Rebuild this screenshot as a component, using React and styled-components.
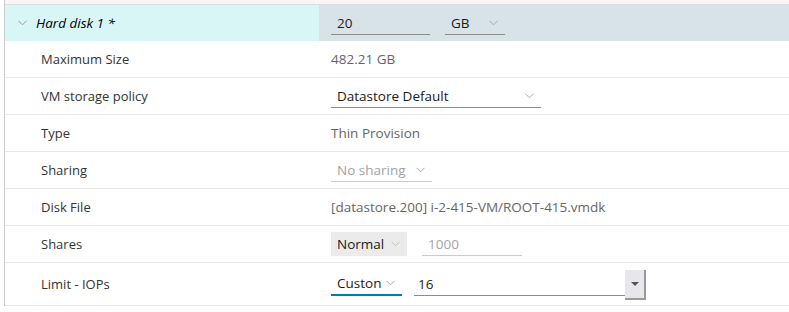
import React from 'react';
import styled, { createGlobalStyle } from 'styled-components';

const GlobalStyle = createGlobalStyle`
  body {
    margin: 0;
    background: #fff;
    font-family: 'Open Sans', 'Noto Sans', sans-serif;
    font-size: 13px;
  }
`;

const Table = styled.div`
  margin-left: 4px;
  border-left: 1px solid #cccccc;
  width: 784px;
`;

const PrevRow = styled.div`
  height: 4px;
  background: #f6f6f6;
  border-bottom: 1px solid #dddddd;
`;

const Row = styled.div`
  display: grid;
  grid-template-columns: 314px 1fr;
  height: ${({ $h }) => $h || 36}px;
  border-bottom: ${({ $head }) => ($head ? 'none' : '1px solid #e8e8e8')};
`;

const LabelCell = styled.div`
  display: flex;
  align-items: center;
  gap: 9px;
  padding-left: ${({ $head }) => ($head ? '13px' : '36px')};
  background: ${({ $head }) => ($head ? '#d8f6f6' : 'transparent')};
  color: ${({ $head }) => ($head ? '#000' : '#333')};
  font-style: ${({ $head }) => ($head ? 'italic' : 'normal')};
  font-size: ${({ $head }) => ($head ? '13.5px' : '13px')};
`;

const ValueCell = styled.div`
  display: flex;
  align-items: center;
  padding-left: 12px;
  background: ${({ $head }) => ($head ? '#d8e3e9' : 'transparent')};
  color: #666;
  font-size: 13.5px;
`;

const Field = styled.div`
  display: flex;
  align-items: center;
  justify-content: space-between;
  box-sizing: border-box;
  width: ${({ $w }) => $w}px;
  height: ${({ $hgt }) => $hgt || 23}px;
  margin-left: ${({ $ml }) => $ml || 0}px;
  padding: 0 7px 0 ${({ $pl }) => $pl || 6}px;
  color: ${({ $off }) => ($off ? '#a3a3a3' : '#1a1a1a')};
  background: ${({ $bg }) => $bg || 'transparent'};
  border-bottom: ${({ $line }) => $line || '1px solid #8c8c8c'};
  font-size: 13.5px;
  white-space: nowrap;
`;

const SpinButton = styled.div`
  display: flex;
  align-items: center;
  justify-content: center;
  width: 21px;
  height: 30px;
  box-sizing: border-box;
  background: #e7e7eb;
  border-right: 2px solid #9a9a9a;
  border-bottom: 2px solid #9a9a9a;
  margin-top: 2px;
`;

const Caret = styled.span`
  width: 0;
  height: 0;
  border-left: 4px solid transparent;
  border-right: 4px solid transparent;
  border-top: 4px solid #555;
`;

const Chevron = ({ color = '#a8a8a8' }) => (
  <svg width="9" height="6" viewBox="0 0 9 6">
    <path d="M0.5 0.8 L4.5 4.8 L8.5 0.8" fill="none" stroke={color} strokeWidth="1" />
  </svg>
);

const App = () => (
  <>
    <GlobalStyle />
    <Table>
      <PrevRow />
      <Row $head>
        <LabelCell $head>
          <Chevron color="#9a9a9a" />
          <span>Hard disk 1 *</span>
        </LabelCell>
        <ValueCell $head>
          <Field $w={99} $hgt={24}>20</Field>
          <Field $w={60} $hgt={24} $ml={15}>
            GB <Chevron />
          </Field>
        </ValueCell>
      </Row>
      <Row>
        <LabelCell>Maximum Size</LabelCell>
        <ValueCell>482.21 GB</ValueCell>
      </Row>
      <Row>
        <LabelCell>VM storage policy</LabelCell>
        <ValueCell>
          <Field $w={210}>
            Datastore Default <Chevron />
          </Field>
        </ValueCell>
      </Row>
      <Row>
        <LabelCell>Type</LabelCell>
        <ValueCell>Thin Provision</ValueCell>
      </Row>
      <Row>
        <LabelCell>Sharing</LabelCell>
        <ValueCell>
          <Field $w={101} $off $line="1px solid #cccccc">
            No sharing <Chevron />
          </Field>
        </ValueCell>
      </Row>
      <Row>
        <LabelCell>Disk File</LabelCell>
        <ValueCell>[datastore.200] i-2-415-VM/ROOT-415.vmdk</ValueCell>
      </Row>
      <Row>
        <LabelCell>Shares</LabelCell>
        <ValueCell>
          <Field $w={76} $hgt={24} $bg="#ebebeb" $line="none">
            Normal <Chevron color="#c4c4c4" />
          </Field>
          <Field $w={100} $ml={15} $off $line="1px solid #cccccc">
            1000
          </Field>
        </ValueCell>
      </Row>
      <Row $h={42}>
        <LabelCell>Limit - IOPs</LabelCell>
        <ValueCell>
          <Field $w={71} $hgt={24} $line="2px solid #0079b8">
            Custon <Chevron />
          </Field>
          <Field $w={211} $ml={12} $pl={4} $line="1px solid #8c8c8c">
            16
          </Field>
          <SpinButton>
            <Caret />
          </SpinButton>
        </ValueCell>
      </Row>
    </Table>
  </>
);

export default App;
